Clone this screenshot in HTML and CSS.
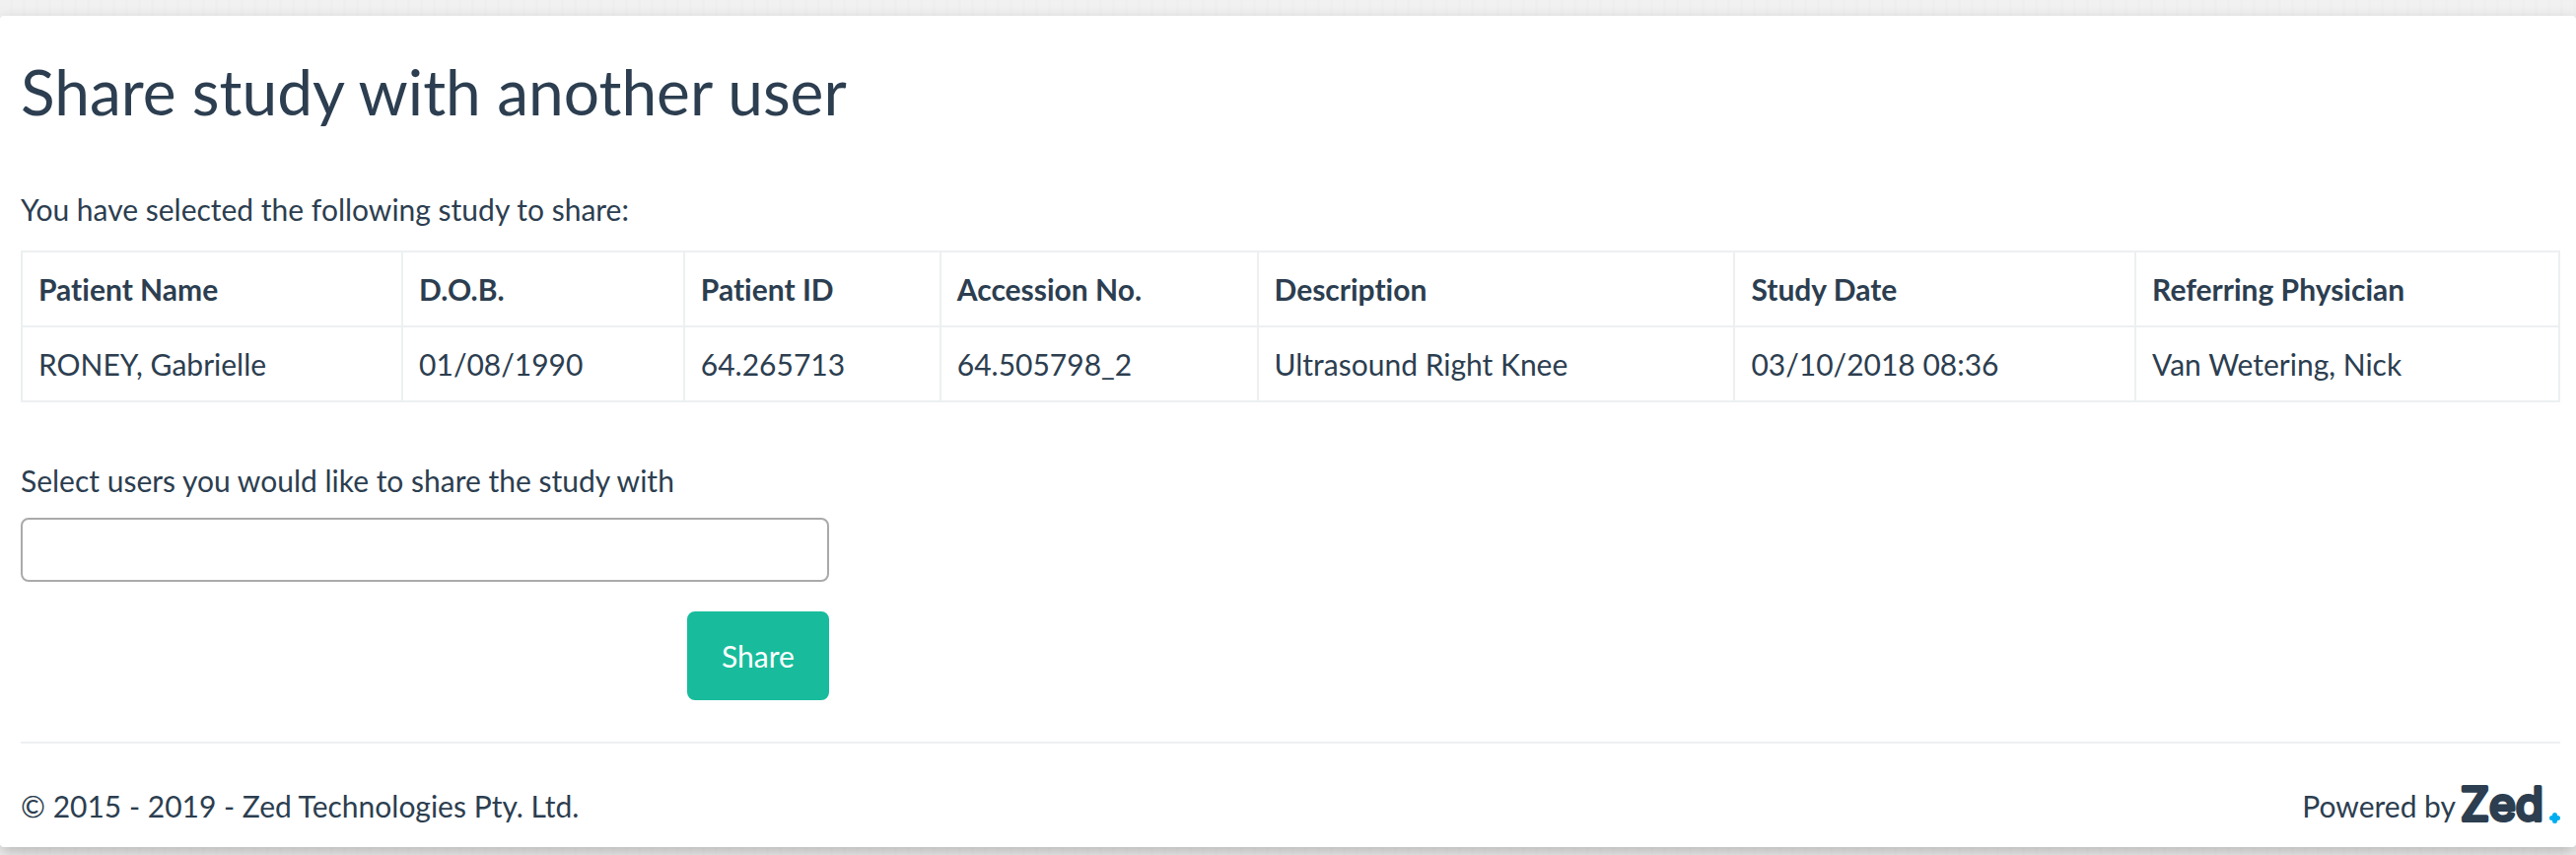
FILE: index.html
```html
<!DOCTYPE html>
<html lang="en">
<head>
    <meta charset="utf-8" />
    <meta name="viewport" content="width=device-width, initial-scale=1.0">
    <title>Share study</title>
    <link rel="stylesheet" href="styles.css">
</head>
<body>
    <div class="body-content">
        <h2>Share study with another user</h2>

        <p class="intro">You have selected the following study to share:</p>
        <table class="table">
            <thead>
                <tr>
                    <th class="col-name">Patient Name</th>
                    <th class="col-dob">D.O.B.</th>
                    <th class="col-id">Patient ID</th>
                    <th class="col-accession">Accession No.</th>
                    <th class="col-description">Description</th>
                    <th class="col-date">Study Date</th>
                    <th>Referring Physician</th>
                </tr>
            </thead>
            <tbody>
                <tr>
                    <td>RONEY, Gabrielle</td>
                    <td>01/08/1990</td>
                    <td>64.265713</td>
                    <td>64.505798_2</td>
                    <td>Ultrasound Right Knee</td>
                    <td>03/10/2018 08:36</td>
                    <td>Van Wetering, Nick</td>
                </tr>
            </tbody>
        </table>

        <form class="share-form">
            <label for="users">Select users you would like to share the study with</label>
            <input type="text" id="users" name="users" autocomplete="off" />
            <button type="submit" class="btn">Share</button>
        </form>

        <hr />
        <footer>
            <span>&copy; 2015 - 2019 - Zed Technologies Pty. Ltd.</span>
            <span class="powered">
                Powered by
                <svg class="logo" width="102" height="42" viewBox="0 0 102 42">
                    <text x="1" y="36">Zed</text>
                    <path d="M96.500 30.500v6M93.500 33.500h6" />
                </svg>
            </span>
        </footer>
    </div>
</body>
</html>
```
FILE: styles.css
```css
body {
    margin: 0;
    padding: 16px 0 8px;
    background: repeating-linear-gradient(90deg, #f1f1f1 0, #f1f1f1 10px, #efefef 10px, #efefef 13px);
    color: #2c3e50;
    font-family: Lato, "Liberation Sans", sans-serif;
    font-size: 30px;
    font-variant-ligatures: none;
    line-height: 42px;
}

.body-content {
    padding: 42px 16px 21px 21px;
    background-color: #fff;
    border-radius: 4px;
    box-shadow: 0 6px 16px rgba(0, 0, 0, 0.24);
}

h2 {
    margin: 0 0 63px;
    font-size: 64px;
    font-weight: 400;
    line-height: 70px;
}

.intro {
    margin: 0 0 21px;
}

.table {
    width: 100%;
    margin-bottom: 58px;
    border-collapse: collapse;
}

.table th,
.table td {
    padding: 16px;
    border: 2px solid #ecf0f1;
    text-align: left;
}

.table .col-name { width: 15%; }
.table .col-dob { width: 11.1%; }
.table .col-id { width: 10.1%; }
.table .col-accession { width: 12.5%; }
.table .col-description { width: 18.8%; }
.table .col-date { width: 15.8%; }

.share-form {
    display: flex;
    flex-direction: column;
    max-width: 820px;
}

.share-form input {
    height: 65px;
    margin: 17px 0 30px;
    padding: 0 16px;
    box-sizing: border-box;
    border: 2px solid #aaa;
    border-radius: 8px;
    background-color: #fff;
    color: inherit;
    font: inherit;
}

.btn {
    align-self: flex-end;
    min-width: 144px;
    padding: 22px 32px;
    border: 2px solid #18bc9c;
    border-radius: 8px;
    background-color: #18bc9c;
    color: #fff;
    font: inherit;
    cursor: pointer;
}

hr {
    margin: 42px 0;
    border: 0;
    border-top: 2px solid #ecf0f1;
}

footer {
    display: flex;
    justify-content: space-between;
}

.powered {
    display: flex;
    gap: 4px;
}

.logo {
    overflow: visible;
}

.logo text {
    fill: #2c3e50;
    stroke: #2c3e50;
    stroke-width: 4px;
    stroke-linejoin: round;
    font-family: Inter, sans-serif;
    font-size: 46px;
    font-weight: 400;
}

.logo path {
    fill: none;
    stroke: #00aeef;
    stroke-width: 5px;
    stroke-linecap: round;
}
```
